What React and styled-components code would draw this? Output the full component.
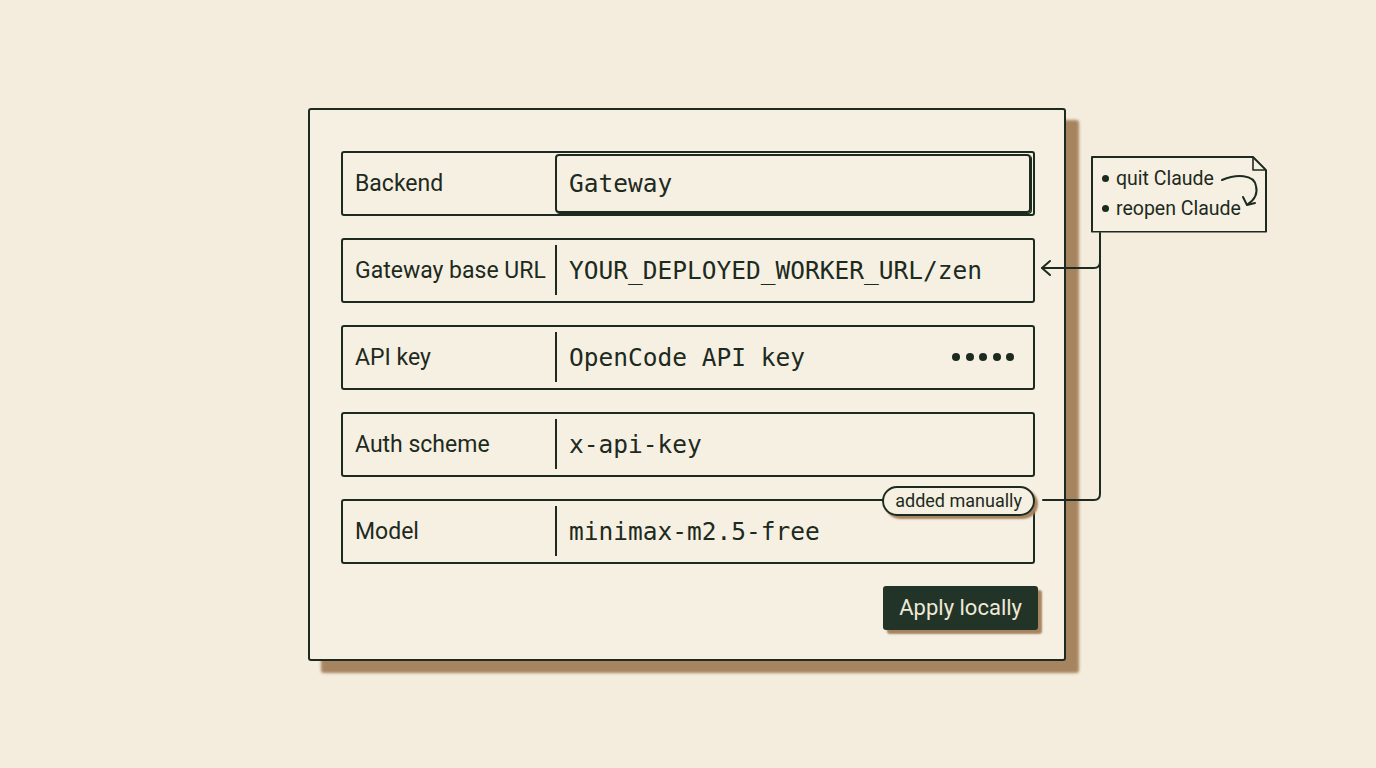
import React from 'react';
import styled, { createGlobalStyle } from 'styled-components';

const INK = '#1d2a20';
const PAPER = '#f4eddd';
const CARD = '#f6f0e3';
const SHADOW = '#a6845f';

const GlobalStyle = createGlobalStyle`
  html, body {
    margin: 0;
    padding: 0;
    background: ${PAPER};
  }
  body {
    font-family: Roboto, "Liberation Sans", sans-serif;
    color: ${INK};
  }
`;

const Page = styled.div`
  height: 100vh;
  display: flex;
  align-items: center;
  justify-content: center;
`;

const Stage = styled.div`
  position: relative;
  margin-left: -2px;
`;

const Card = styled.div`
  width: 758px;
  box-sizing: border-box;
  padding: 41px 29px 29px 31px;
  background: ${CARD};
  border: 2px solid ${INK};
  border-radius: 3px;
  box-shadow: 13px 12px 3px ${SHADOW};
  display: flex;
  flex-direction: column;
  gap: 22px;
`;

const Row = styled.div`
  position: relative;
  height: 65px;
  box-sizing: border-box;
  border: 2px solid ${INK};
  border-radius: 3px;
  display: grid;
  grid-template-columns: 212px 1fr;
  align-items: center;
`;

const Label = styled.div`
  padding-left: 12px;
  font-size: 23px;
  white-space: nowrap;
`;

const Value = styled.div`
  height: 50px;
  display: flex;
  align-items: center;
  justify-content: space-between;
  padding: 0 19px 0 12px;
  border-left: 2px solid ${INK};
  font-family: "DejaVu Sans Mono", "Liberation Mono", monospace;
  font-size: 24.5px;
  white-space: nowrap;
`;

const Picked = styled.div`
  align-self: stretch;
  margin: 1px 2px 1px 0;
  display: flex;
  align-items: center;
  padding-left: 12px;
  border: 2px solid ${INK};
  border-radius: 4px;
  box-shadow: 1px 1px 0 ${INK};
  font-family: "DejaVu Sans Mono", "Liberation Mono", monospace;
  font-size: 24.5px;
`;

const Dots = styled.div`
  display: flex;
  gap: 5.5px;
`;

const Dot = styled.span`
  width: 8px;
  height: 8px;
  border-radius: 50%;
  background: ${INK};
`;

const Pill = styled.div`
  position: absolute;
  top: -15px;
  right: -2px;
  height: 30px;
  box-sizing: border-box;
  padding: 0 11px;
  display: flex;
  align-items: center;
  background: ${CARD};
  border: 2px solid ${INK};
  border-radius: 15px;
  box-shadow: 3px 3px 2px ${SHADOW};
  font-size: 18px;
`;

const Footer = styled.div`
  display: flex;
  justify-content: flex-end;
  margin-right: -3px;
`;

const ApplyButton = styled.button`
  height: 44px;
  padding: 0 16px;
  border: none;
  border-radius: 3px;
  background: #223427;
  color: #efe9d8;
  font-family: Roboto, "Liberation Sans", sans-serif;
  font-size: 22px;
  box-shadow: 4px 4px 2px ${SHADOW};
  cursor: pointer;
`;

const Note = styled.div`
  position: absolute;
  left: 783px;
  top: 48px;
  width: 176px;
  height: 77px;
  box-sizing: border-box;
  padding: 8px 0 0 11px;
  background: ${CARD};
  clip-path: polygon(0 0, 163px 0, 176px 14px, 176px 100%, 0 100%);
`;

const NoteFrame = styled.svg`
  position: absolute;
  inset: 0;
  overflow: visible;
`;

const NoteItem = styled.div`
  position: relative;
  display: flex;
  align-items: center;
  gap: 7px;
  height: 30px;
  font-size: 19.5px;

  &::before {
    content: '';
    width: 7px;
    height: 7px;
    border-radius: 50%;
    background: ${INK};
  }
`;

const Wires = styled.svg`
  position: absolute;
  left: 0;
  top: 0;
  overflow: visible;
  pointer-events: none;
`;

const fields = [
  { label: 'Gateway base URL', value: 'YOUR_DEPLOYED_WORKER_URL/zen' },
  { label: 'API key', value: 'OpenCode API key', secret: true },
  { label: 'Auth scheme', value: 'x-api-key' },
];

const App = () => {
  return (
    <Page>
      <GlobalStyle />
      <Stage>
        <Card>
          <Row>
            <Label>Backend</Label>
            <Picked>Gateway</Picked>
          </Row>

          {fields.map((f) => (
            <Row key={f.label}>
              <Label>{f.label}</Label>
              <Value>
                <span>{f.value}</span>
                {f.secret && (
                  <Dots>
                    {[0, 1, 2, 3, 4].map((i) => <Dot key={i} />)}
                  </Dots>
                )}
              </Value>
            </Row>
          ))}

          <Row>
            <Label>Model</Label>
            <Value>minimax-m2.5-free</Value>
            <Pill>added manually</Pill>
          </Row>

          <Footer>
            <ApplyButton>Apply locally</ApplyButton>
          </Footer>
        </Card>

        <Note>
          <NoteFrame width="176" height="77">
            <path d="M1 1 H162 L175 14 V76 H1 Z" fill="none" stroke={INK} strokeWidth="2" strokeLinejoin="round" />
            <path d="M162 1 V14 H175" fill="none" stroke={INK} strokeWidth="1.6" strokeLinejoin="round" />
          </NoteFrame>
          <NoteItem>quit Claude</NoteItem>
          <NoteItem>reopen Claude</NoteItem>
        </Note>

        {/* connectors from the note back into the form */}
        <Wires width="980" height="560">
          <g fill="none" stroke={INK} strokeWidth="2" strokeLinecap="round" strokeLinejoin="round">
            <path d="M792 125 V386 Q792 392 786 392 H735" />
            <path d="M792 154 Q792 160 786 160 H734" />
            <path d="M742 153 L734 160 L742 167" />
            <path d="M914 72 C928 66, 946 66, 948 78 C950 86, 946 92, 940 96" />
            <path d="M935 89 L939 97 L947 95" />
          </g>
        </Wires>
      </Stage>
    </Page>
  );
};

export default App;
